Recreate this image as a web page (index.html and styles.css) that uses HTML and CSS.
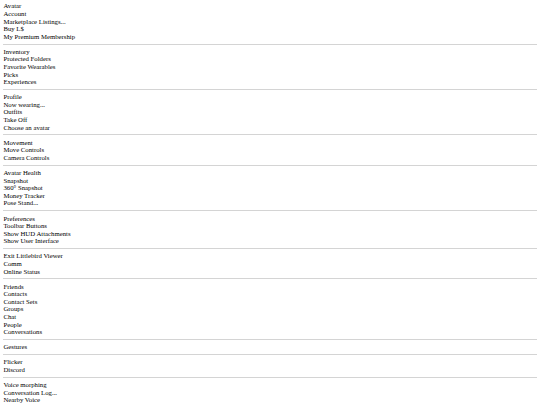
FILE: index.html
```html
<!DOCTYPE html>
<html lang="en">
  <head>
    <meta charset="UTF-8" />
    <meta name="viewport" content="width=device-width, initial-scale=1.0" />
    <title>Menu</title>
    <link rel="stylesheet" href="styles.css">
  </head>
  <body>
    <div class="group">
      <div class="item">Avatar</div>
      <div class="item">Account</div>
      <div class="item">Marketplace Listings...</div>
      <div class="item">Buy L$</div>
      <div class="item">My Premium Membership</div>
    </div>
    <hr class="sep">
    <div class="group">
      <div class="item">Inventory</div>
      <div class="item">Protected Folders</div>
      <div class="item">Favorite Wearables</div>
      <div class="item">Picks</div>
      <div class="item">Experiences</div>
    </div>
    <hr class="sep">
    <div class="group">
      <div class="item">Profile</div>
      <div class="item">Now wearing...</div>
      <div class="item">Outfits</div>
      <div class="item">Take Off</div>
      <div class="item">Choose an avatar</div>
    </div>
    <hr class="sep">
    <div class="group">
      <div class="item">Movement</div>
      <div class="item">Move Controls</div>
      <div class="item">Camera Controls</div>
    </div>
    <hr class="sep">
    <div class="group">
      <div class="item">Avatar Health</div>
      <div class="item">Snapshot</div>
      <div class="item">360° Snapshot</div>
      <div class="item">Money Tracker</div>
      <div class="item">Pose Stand...</div>
    </div>
    <hr class="sep">
    <div class="group">
      <div class="item">Preferences</div>
      <div class="item">Toolbar Buttons</div>
      <div class="item">Show HUD Attachments</div>
      <div class="item">Show User Interface</div>
    </div>
    <hr class="sep">
    <div class="group">
      <div class="item">Exit Littlebird Viewer</div>
      <div class="item">Comm</div>
      <div class="item">Online Status</div>
    </div>
    <hr class="sep">
    <div class="group">
      <div class="item">Friends</div>
      <div class="item">Contacts</div>
      <div class="item">Contact Sets</div>
      <div class="item">Groups</div>
      <div class="item">Chat</div>
      <div class="item">People</div>
      <div class="item">Conversations</div>
    </div>
    <hr class="sep">
    <div class="group">
      <div class="item">Gestures</div>
    </div>
    <hr class="sep">
    <div class="group">
      <div class="item">Flicker</div>
      <div class="item">Discord</div>
    </div>
    <hr class="sep">
    <div class="group">
      <div class="item">Voice morphing</div>
      <div class="item">Conversation Log...</div>
      <div class="item">Nearby Voice</div>
    </div>
  </body>
</html>
```

FILE: styles.css
```css
body {
  margin: 2.4px 3.4px 0;
  font-family: "Liberation Serif", serif;
  font-size: 6.75px;
  line-height: 7.58px;
  color: #000;
  background-color: #fff;
}
.item {
  white-space: nowrap;
}
.sep {
  height: 0;
  margin: 3.29px 0;
  border: none;
  border-top: 1px solid #d4d4d4;
}
```
